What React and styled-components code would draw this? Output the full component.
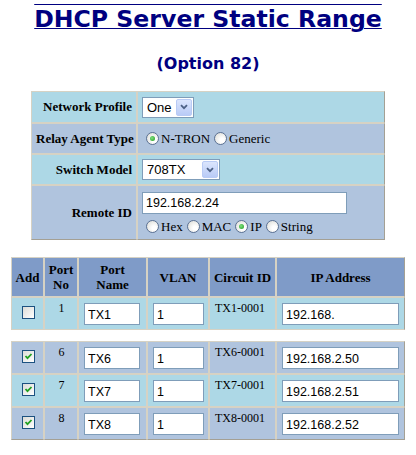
import React from "react";
import styled, { createGlobalStyle } from "styled-components";

const GlobalStyle = createGlobalStyle`
  body {
    margin: 0;
    background: #fff;
    font-family: "Liberation Serif", "Times New Roman", serif;
    color: #000;
  }
`;

const SERIF = `"Liberation Serif", "Times New Roman", serif`;
const LIGHT_BLUE = "#add8e6";
const STEEL_BLUE = "#b0c4de";
const HEAD_BLUE = "#7f9bc8";
const GRID = "#d6d2c4";
const EDGE = "#a4a094";

const Page = styled.div`
  width: 416px;
  display: flex;
  flex-direction: column;
  align-items: center;
  padding-top: 5px;
`;

const Title = styled.h1`
  margin: 0;
  font-family: "DejaVu Sans", Verdana, sans-serif;
  font-size: 23.6px;
  line-height: 28px;
  font-weight: 700;
  color: #000080;
  text-decoration: underline overline;
  text-decoration-thickness: 1px;
`;

const Subtitle = styled.h2`
  margin: 21px 0 0;
  font-family: "DejaVu Sans", Verdana, sans-serif;
  font-size: 16px;
  line-height: 20px;
  font-weight: 700;
  color: #000080;
`;

const Grid = styled.table`
  margin-top: ${(p) => p.$mt}px;
  width: ${(p) => p.$w}px;
  border-collapse: separate;
  border-spacing: 0;
  table-layout: fixed;
  font-family: ${SERIF};
  font-size: 13px;

  td,
  th {
    border: 1px solid ${GRID};
    font-family: ${SERIF};
  }
  tr > *:last-child {
    border-right-color: ${EDGE};
  }
  tr:last-child > * {
    border-bottom-color: ${EDGE};
  }
`;

const Row = styled.tr`
  height: ${(p) => p.$h}px;
  background: ${(p) => p.$bg};
`;

const Label = styled.th`
  text-align: right;
  padding: 0 4px;
  font-weight: 700;
  white-space: nowrap;
`;

const Value = styled.td`
  text-align: left;
  padding: 0 4px;
  white-space: nowrap;
`;

const HeadCell = styled.th`
  background: ${HEAD_BLUE};
  font-weight: 700;
  line-height: 15px;
  padding: 0 2px;
  text-align: center;
`;

const Cell = styled.td`
  vertical-align: top;
  text-align: ${(p) => p.$align || "left"};
  padding: ${(p) => p.$pt}px 4px 0 5px;
  font-size: 12px;
  line-height: 14px;
`;

const Gap = styled.td`
  border: none !important;
  padding: 0;
  background: #fff;
`;

const TextBox = styled.input`
  box-sizing: border-box;
  display: block;
  width: ${(p) => p.$w}px;
  height: 22px;
  margin: 0;
  padding: 1px 3px 0;
  border: 1px solid #7f9db9;
  background: #fff;
  font-family: "Liberation Sans", Arial, sans-serif;
  font-size: 12.5px;
  color: #000;
  outline: none;
`;

const SelectBox = styled.div`
  box-sizing: border-box;
  display: inline-flex;
  align-items: center;
  justify-content: space-between;
  vertical-align: middle;
  width: ${(p) => p.$w}px;
  height: 21px;
  padding: 0 1px 0 4px;
  border: 1px solid #7f9db9;
  background: #fff;
  font-family: "Liberation Sans", Arial, sans-serif;
  font-size: 13px;
`;

const ArrowButton = styled.span`
  box-sizing: border-box;
  display: flex;
  align-items: center;
  justify-content: center;
  width: 16px;
  height: 17px;
  border: 1px solid #b9cbf5;
  border-radius: 2px;
  background: linear-gradient(#dbe5fd, #b9cbf6);
`;

const RadioRow = styled.div`
  display: flex;
  align-items: center;
  margin-top: ${(p) => p.$mt || 0}px;
  font-family: ${SERIF};
  font-size: 13px;
  line-height: 15px;
`;

const RadioText = styled.span`
  font-family: ${SERIF};
`;

const RadioDot = styled.span`
  box-sizing: border-box;
  position: relative;
  display: inline-block;
  width: 13px;
  height: 13px;
  margin: 0 2px 0 4px;
  border: 1px solid #5b7193;
  border-radius: 50%;
  background: radial-gradient(circle at 65% 65%, #ffffff 20%, #d8d8d2 100%);

  &::after {
    content: "";
    display: ${(p) => (p.$on ? "block" : "none")};
    position: absolute;
    left: 3px;
    top: 3px;
    width: 5px;
    height: 5px;
    border-radius: 50%;
    background: radial-gradient(circle at 40% 40%, #7fe07f, #1f9a1f);
  }
`;

const CheckBox = styled.span`
  box-sizing: border-box;
  display: block;
  width: 13px;
  height: 13px;
  margin: 3px auto 0;
  border: 1px solid #1c5180;
  background: linear-gradient(135deg, #dcdcd7, #ffffff);
`;

const Radio = ({ on, children }) => (
  <>
    <RadioDot $on={on} />
    <RadioText>{children}</RadioText>
  </>
);

const Chevron = () => (
  <svg width="8" height="6" viewBox="0 0 8 6">
    <path d="M1 1.2 L4 4.2 L7 1.2" fill="none" stroke="#4d6185" strokeWidth="1.8" />
  </svg>
);

const Select = ({ w, value }) => (
  <SelectBox $w={w}>
    <span>{value}</span>
    <ArrowButton>
      <Chevron />
    </ArrowButton>
  </SelectBox>
);

const Check = ({ on }) => (
  <CheckBox>
    {on && (
      <svg width="11" height="11" viewBox="0 0 11 11">
        <path d="M2.5 5 L4.5 7.2 L8.5 3" fill="none" stroke="#21a121" strokeWidth="1.8" />
      </svg>
    )}
  </CheckBox>
);

const ports = [
  { no: 1, name: "TX1", vlan: "1", circuit: "TX1-0001", ip: "192.168.", on: false, bg: LIGHT_BLUE },
  { gap: true },
  { no: 6, name: "TX6", vlan: "1", circuit: "TX6-0001", ip: "192.168.2.50", on: true, bg: STEEL_BLUE },
  { no: 7, name: "TX7", vlan: "1", circuit: "TX7-0001", ip: "192.168.2.51", on: true, bg: LIGHT_BLUE },
  { no: 8, name: "TX8", vlan: "1", circuit: "TX8-0001", ip: "192.168.2.52", on: true, bg: STEEL_BLUE },
];

export default function App() {
  return (
    <Page>
      <GlobalStyle />
      <Title>DHCP Server Static Range</Title>
      <Subtitle>(Option 82)</Subtitle>

      <Grid $w={354} $mt={17}>
        <colgroup>
          <col style={{ width: 106 }} />
          <col />
        </colgroup>
        <tbody>
          <Row $h={32} $bg={LIGHT_BLUE}>
            <Label>Network Profile</Label>
            <Value>
              <Select w={52} value="One" />
            </Value>
          </Row>
          <Row $h={31} $bg={STEEL_BLUE}>
            <Label>Relay Agent Type</Label>
            <Value>
              <RadioRow>
                <Radio on>N-TRON</Radio>
                <Radio>Generic</Radio>
              </RadioRow>
            </Value>
          </Row>
          <Row $h={31} $bg={LIGHT_BLUE}>
            <Label>Switch Model</Label>
            <Value>
              <Select w={78} value="708TX" />
            </Value>
          </Row>
          <Row $h={55} $bg={STEEL_BLUE}>
            <Label>Remote ID</Label>
            <Value>
              <TextBox $w={205} defaultValue="192.168.2.24" />
              <RadioRow $mt={5}>
                <Radio>Hex</Radio>
                <Radio>MAC</Radio>
                <Radio on>IP</Radio>
                <Radio>String</Radio>
              </RadioRow>
            </Value>
          </Row>
        </tbody>
      </Grid>

      <Grid $w={394} $mt={17}>
        <colgroup>
          <col style={{ width: 33 }} />
          <col style={{ width: 34 }} />
          <col style={{ width: 69 }} />
          <col style={{ width: 62 }} />
          <col style={{ width: 67 }} />
          <col />
        </colgroup>
        <tbody>
          <Row $h={40}>
            <HeadCell>Add</HeadCell>
            <HeadCell>
              Port
              <br />
              No
            </HeadCell>
            <HeadCell>
              Port
              <br />
              Name
            </HeadCell>
            <HeadCell>VLAN</HeadCell>
            <HeadCell>Circuit ID</HeadCell>
            <HeadCell>IP Address</HeadCell>
          </Row>
          {ports.map((p, i) =>
            p.gap ? (
              <Row key={i} $h={11}>
                <Gap colSpan={6} />
              </Row>
            ) : (
              <Row key={i} $h={33} $bg={p.bg}>
                <Cell $pt={5} $align="center">
                  <Check on={p.on} />
                </Cell>
                <Cell $pt={3} $align="center">
                  {p.no}
                </Cell>
                <Cell $pt={5}>
                  <TextBox $w={56} defaultValue={p.name} />
                </Cell>
                <Cell $pt={5}>
                  <TextBox $w={51} defaultValue={p.vlan} />
                </Cell>
                <Cell $pt={3}>{p.circuit}</Cell>
                <Cell $pt={5}>
                  <TextBox $w={117} defaultValue={p.ip} />
                </Cell>
              </Row>
            )
          )}
        </tbody>
      </Grid>
    </Page>
  );
}
